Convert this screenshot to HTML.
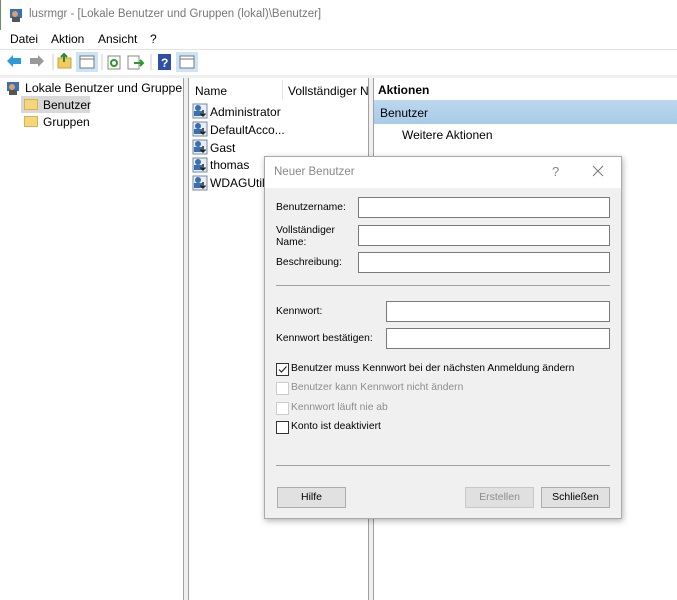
<!DOCTYPE html>
<html><head><meta charset="utf-8"><style>
*{margin:0;padding:0;box-sizing:border-box}
body{width:677px;height:600px;overflow:hidden;background:#fff;font-family:"Liberation Sans",sans-serif;font-size:12px;color:#000;position:relative}
.a{position:absolute}
.t{white-space:nowrap}
.fold{position:absolute;width:14px;height:11px;background:#f4d77c;border:1px solid #d9b24a}
.inp{position:absolute;height:21px;background:#fff;border:1px solid #7a7a7a}
.cb{position:absolute;width:13px;height:13px;border:1px solid #333;background:#fff}
.cbd{border-color:#ccc}
.btn{position:absolute;height:21px;border:1px solid #adadad;background:#e1e1e1;text-align:center;line-height:19px;font-size:10.5px}
.d{font-size:10.3px}
</style></head><body>
<div class="a" style="left:0;top:0;width:677px;height:30px;background:#fff;border-left:1px solid #6b8e6b"></div>
<svg class="a" style="left:8px;top:7px" width="18" height="16"><rect x="2" y="2" width="12" height="9" fill="#3a6fb0"/><circle cx="7" cy="7" r="3" fill="#d8a070"/><rect x="4" y="10" width="8" height="5" fill="#555"/></svg>
<div class="a t" style="left:29px;top:8px;font-size:11.5px;color:#777">lusrmgr - [Lokale Benutzer und Gruppen (lokal)\Benutzer]</div>
<div class="a t" style="left:10px;top:32px">Datei</div>
<div class="a t" style="left:51px;top:32px">Aktion</div>
<div class="a t" style="left:98px;top:32px">Ansicht</div>
<div class="a t" style="left:150px;top:32px">?</div>
<div class="a" style="left:0;top:49px;width:677px;height:1px;background:#e3e3e3"></div>
<svg class="a" style="left:4px;top:52px" width="200" height="20">
<path d="M3 9 L9 3 L9 6 L17 6 L17 12 L9 12 L9 15 Z" fill="#2a9bd8"/>
<path d="M40 9 L34 3 L34 6 L26 6 L26 12 L34 12 L34 15 Z" fill="#999"/>
<line x1="49" y1="2" x2="49" y2="18" stroke="#ccc"/>
<rect x="54" y="6" width="13" height="10" fill="#f0cc60" stroke="#c9a040"/><path d="M60 10 L60 2 M57 5 L60 2 L63 5" stroke="#2a8a2a" stroke-width="2" fill="none"/>
<rect x="72" y="0" width="22" height="20" fill="#cce4f7"/><rect x="76" y="4" width="14" height="12" fill="#fff" stroke="#777"/><line x1="76" y1="7" x2="90" y2="7" stroke="#777"/>
<line x1="98" y1="2" x2="98" y2="18" stroke="#ccc"/>
<rect x="104" y="4" width="12" height="13" fill="#fff" stroke="#888"/><circle cx="110" cy="11" r="3" fill="none" stroke="#2a9a2a" stroke-width="2"/>
<rect x="124" y="4" width="11" height="13" fill="#fff" stroke="#888"/><path d="M130 11 L139 11 M136 8 L139 11 L136 14" stroke="#2a9a2a" stroke-width="2" fill="none"/>
<line x1="147" y1="2" x2="147" y2="18" stroke="#ccc"/>
<rect x="154" y="2" width="13" height="16" fill="#2d4fa8"/><text x="157" y="15" fill="#fff" font-size="12" font-weight="bold" font-family="Liberation Sans">?</text>
<rect x="172" y="0" width="22" height="20" fill="#cce4f7"/><rect x="176" y="4" width="14" height="12" fill="#fff" stroke="#777"/><line x1="176" y1="7" x2="190" y2="7" stroke="#777"/>
</svg>
<div class="a" style="left:0;top:75px;width:677px;height:3px;background:#f0f0f0"></div>
<svg class="a" style="left:5px;top:80px" width="18" height="16"><rect x="2" y="2" width="12" height="9" fill="#3a6fb0"/><circle cx="7" cy="7" r="3" fill="#d8a070"/><rect x="4" y="10" width="8" height="5" fill="#555"/></svg>
<div class="a t" style="left:25px;top:81px;width:158px;overflow:hidden;font-size:12.3px">Lokale Benutzer und Gruppen (lokal)</div>
<div class="a" style="left:21px;top:96px;width:69px;height:17px;background:#d9d9d9"></div>
<div class="fold" style="left:24px;top:99px"></div>
<div class="a t" style="left:43px;top:98px">Benutzer</div>
<div class="fold" style="left:24px;top:116px"></div>
<div class="a t" style="left:43px;top:115px">Gruppen</div>
<div class="a" style="left:183px;top:78px;width:6px;height:522px;border-left:1px solid #a0a0a0;border-right:1px solid #a0a0a0;background:#f0f0f0"></div>
<div class="a t" style="left:195px;top:84px">Name</div>
<div class="a" style="left:282px;top:80px;width:1px;height:20px;background:#e5e5e5"></div>
<div class="a t" style="left:288px;top:84px;width:80px;overflow:hidden">Vollständiger Name</div>
<div class="a" style="left:368px;top:78px;width:6px;height:522px;border-left:1px solid #a0a0a0;border-right:1px solid #a0a0a0;background:#f0f0f0"></div>
<svg class="a" style="left:192px;top:103px" width="17" height="90">
<g id="u"><rect x="1" y="1" width="14" height="14" fill="#e8eef6" stroke="#7a8aa0"/><circle cx="6" cy="5" r="3" fill="#3a6fb0"/><rect x="2" y="8" width="8" height="5" fill="#3a6fb0"/><path d="M11 7 L11 13 M8.5 10.5 L11 13 L13.5 10.5" stroke="#222" stroke-width="1.5" fill="none"/></g>
<use href="#u" y="18"/><use href="#u" y="36"/><use href="#u" y="54"/><use href="#u" y="72"/>
</svg>
<div class="a t" style="left:210px;top:105px">Administrator</div>
<div class="a t" style="left:210px;top:123px">DefaultAcco...</div>
<div class="a t" style="left:210px;top:141px">Gast</div>
<div class="a t" style="left:210px;top:158px">thomas</div>
<div class="a t" style="left:210px;top:176px">WDAGUtilityAccount</div>
<div class="a t" style="left:378px;top:83px;font-weight:bold">Aktionen</div>
<div class="a" style="left:374px;top:100px;width:303px;height:24px;background:linear-gradient(#bcd7ee,#a9cbe8)"></div>
<div class="a t" style="left:380px;top:106px">Benutzer</div>
<div class="a t" style="left:402px;top:128px">Weitere Aktionen</div>
<div class="a" style="left:264px;top:156px;width:358px;height:363px;border:1px solid #aaa;background:#f0f0f0;box-shadow:1px 2px 6px rgba(0,0,0,.3)"></div>
<div class="a" style="left:265px;top:157px;width:356px;height:31px;background:#fff"></div>
<div class="a t" style="left:274px;top:166px;color:#888;font-size:11.5px">Neuer Benutzer</div>
<div class="a t" style="left:552px;top:164px;color:#888;font-size:13px">?</div>
<svg class="a" style="left:592px;top:165px" width="12" height="12"><path d="M1 1 L11 11 M11 1 L1 11" stroke="#777" stroke-width="1"/></svg>
<div class="a t d" style="left:276px;top:202px">Benutzername:</div>
<div class="inp" style="left:358px;top:197px;width:252px"></div>
<div class="a d" style="left:276px;top:225px;line-height:12px">Vollständiger<br>Name:</div>
<div class="inp" style="left:358px;top:225px;width:252px"></div>
<div class="a t d" style="left:276px;top:257px">Beschreibung:</div>
<div class="inp" style="left:358px;top:252px;width:252px"></div>
<div class="a" style="left:276px;top:285px;width:334px;height:1px;background:#a0a0a0"></div>
<div class="a t d" style="left:276px;top:306px">Kennwort:</div>
<div class="inp" style="left:386px;top:301px;width:224px"></div>
<div class="a t d" style="left:276px;top:333px">Kennwort bestätigen:</div>
<div class="inp" style="left:386px;top:328px;width:224px"></div>
<div class="cb" style="left:276px;top:363px"></div>
<svg class="a" style="left:277px;top:364px" width="11" height="11"><path d="M2 5.5 L4.5 8 L9.5 2.5" stroke="#222" stroke-width="1.2" fill="none"/></svg>
<div class="a t d" style="left:291px;top:363px">Benutzer muss Kennwort bei der nächsten Anmeldung ändern</div>
<div class="cb cbd" style="left:276px;top:382px"></div>
<div class="a t d" style="left:291px;top:382px;color:#8d8d8d">Benutzer kann Kennwort nicht ändern</div>
<div class="cb cbd" style="left:276px;top:402px"></div>
<div class="a t d" style="left:291px;top:402px;color:#8d8d8d">Kennwort läuft nie ab</div>
<div class="cb" style="left:276px;top:421px"></div>
<div class="a t d" style="left:291px;top:421px">Konto ist deaktiviert</div>
<div class="a" style="left:276px;top:465px;width:334px;height:1px;background:#a0a0a0"></div>
<div class="btn" style="left:277px;top:487px;width:69px">Hilfe</div>
<div class="btn" style="left:465px;top:487px;width:69px;color:#8d8d8d;border-color:#c8c8c8;background:#e0e0e0">Erstellen</div>
<div class="btn" style="left:541px;top:487px;width:69px">Schließen</div>
</body></html>
